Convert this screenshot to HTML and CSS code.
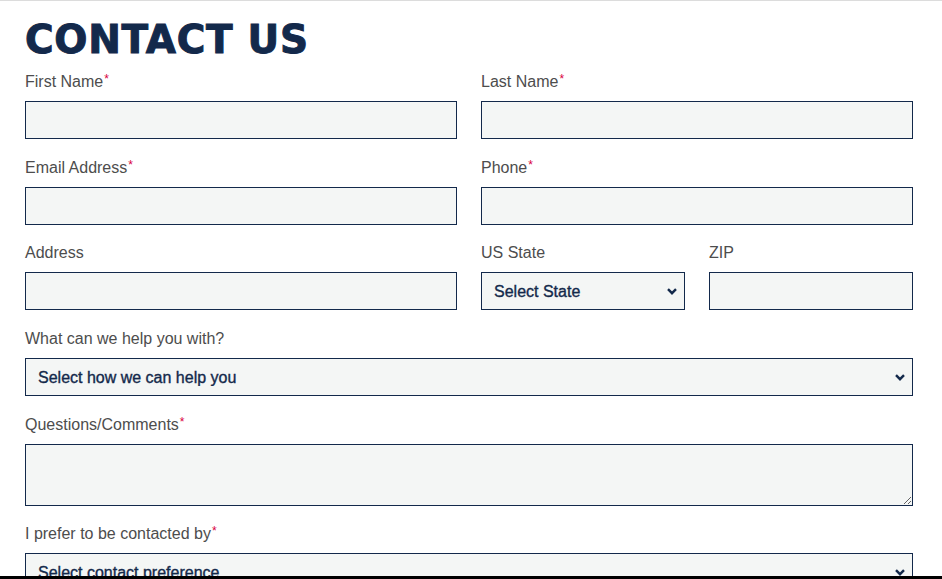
FILE: index.html
```
<!DOCTYPE html>
<html>
<head>
<meta name="viewport" content="width=device-width, initial-scale=1.0">
<link rel="stylesheet" href="styles.css">
</head>
<body>

<!-- FORMULARIO DE CONTACTO -->
<div class="page">
  <h1 class="title">CONTACT US</h1>
  <form class="contact-form">
    <div class="field half">
      <label for="first">First Name<span class="req">*</span></label>
      <input id="first" type="text">
    </div>
    <div class="field half">
      <label for="last">Last Name<span class="req">*</span></label>
      <input id="last" type="text">
    </div>
    <div class="field half">
      <label for="email">Email Address<span class="req">*</span></label>
      <input id="email" type="email">
    </div>
    <div class="field half">
      <label for="phone">Phone<span class="req">*</span></label>
      <input id="phone" type="tel">
    </div>
    <div class="field half">
      <label for="address">Address</label>
      <input id="address" type="text">
    </div>
    <div class="field">
      <label for="state">US State</label>
      <div class="select-wrap">
        <select id="state"><option>Select State</option></select>
        <svg class="chevron" width="10" height="7" viewBox="0 0 10 7"><path d="M1 1.2 L5 5.2 L9 1.2" fill="none" stroke="#13294b" stroke-width="2.4"/></svg>
      </div>
    </div>
    <div class="field">
      <label for="zip">ZIP</label>
      <input id="zip" type="text">
    </div>
    <div class="field full">
      <label for="help">What can we help you with?</label>
      <div class="select-wrap">
        <select id="help"><option>Select how we can help you</option></select>
        <svg class="chevron" width="10" height="7" viewBox="0 0 10 7"><path d="M1 1.2 L5 5.2 L9 1.2" fill="none" stroke="#13294b" stroke-width="2.4"/></svg>
      </div>
    </div>
    <div class="field full">
      <label for="comments">Questions/Comments<span class="req">*</span></label>
      <textarea id="comments"></textarea>
    </div>
    <div class="field full">
      <label for="pref">I prefer to be contacted by<span class="req">*</span></label>
      <div class="select-wrap">
        <select id="pref"><option>Select contact preference</option></select>
        <svg class="chevron" width="10" height="7" viewBox="0 0 10 7"><path d="M1 1.2 L5 5.2 L9 1.2" fill="none" stroke="#13294b" stroke-width="2.4"/></svg>
      </div>
    </div>
  </form>
</div>
<div class="bottom-bar"></div>
</body>
</html>
```

FILE: styles.css
```
* {
  box-sizing: border-box;
}

body {
  margin: 0;
  border-top: 1px solid #dcdcdc;
  font-family: "Liberation Sans", Arial, sans-serif;
  color: #4a4a4a;
  background: #fff;
}

.page {
  padding: 0 29px 0 25px;
}

.title {
  margin: 16px 0 7px;
  font-family: "DejaVu Sans", sans-serif;
  font-weight: bold;
  font-size: 39px;
  line-height: 45px;
  letter-spacing: 0.7px;
  color: #13294b;
  -webkit-text-stroke: 1px #13294b;
}

/*Grilla del formulario: 4 columnas de 204px*/
.contact-form {
  display: grid;
  grid-template-columns: repeat(4, 204px);
  column-gap: 24px;
  row-gap: 15.7px;
}

.field {
  display: flex;
  flex-direction: column;
}

.field.half {
  grid-column: span 2;
}

.field.full {
  grid-column: span 4;
}

label {
  font-size: 16px;
  line-height: 26px;
  height: 24px;
  margin-bottom: 8px;
  color: #4d4d4d;
}

.req {
  color: #d9003d;
  font-size: 12px;
  line-height: 0;
  vertical-align: 4px;
  margin-left: 1px;
}

input,
select,
textarea {
  display: block;
  width: 100%;
  height: 38px;
  margin: 0;
  border: 1px solid #13294b;
  border-radius: 0;
  background: #f4f6f5;
  font-family: "Liberation Sans", Arial, sans-serif;
  font-size: 16px;
  color: #13294b;
  outline: none;
}

textarea {
  height: 62px;
  resize: vertical;
}

.select-wrap {
  position: relative;
}

select {
  appearance: none;
  -webkit-appearance: none;
  padding: 0 30px 0 12px;
  -webkit-text-stroke: 0.35px #13294b;
}

.chevron {
  position: absolute;
  right: 8px;
  top: 16px;
  pointer-events: none;
}

.bottom-bar {
  position: fixed;
  left: 0;
  right: 0;
  bottom: 0;
  height: 3px;
  background: #000;
}
```
